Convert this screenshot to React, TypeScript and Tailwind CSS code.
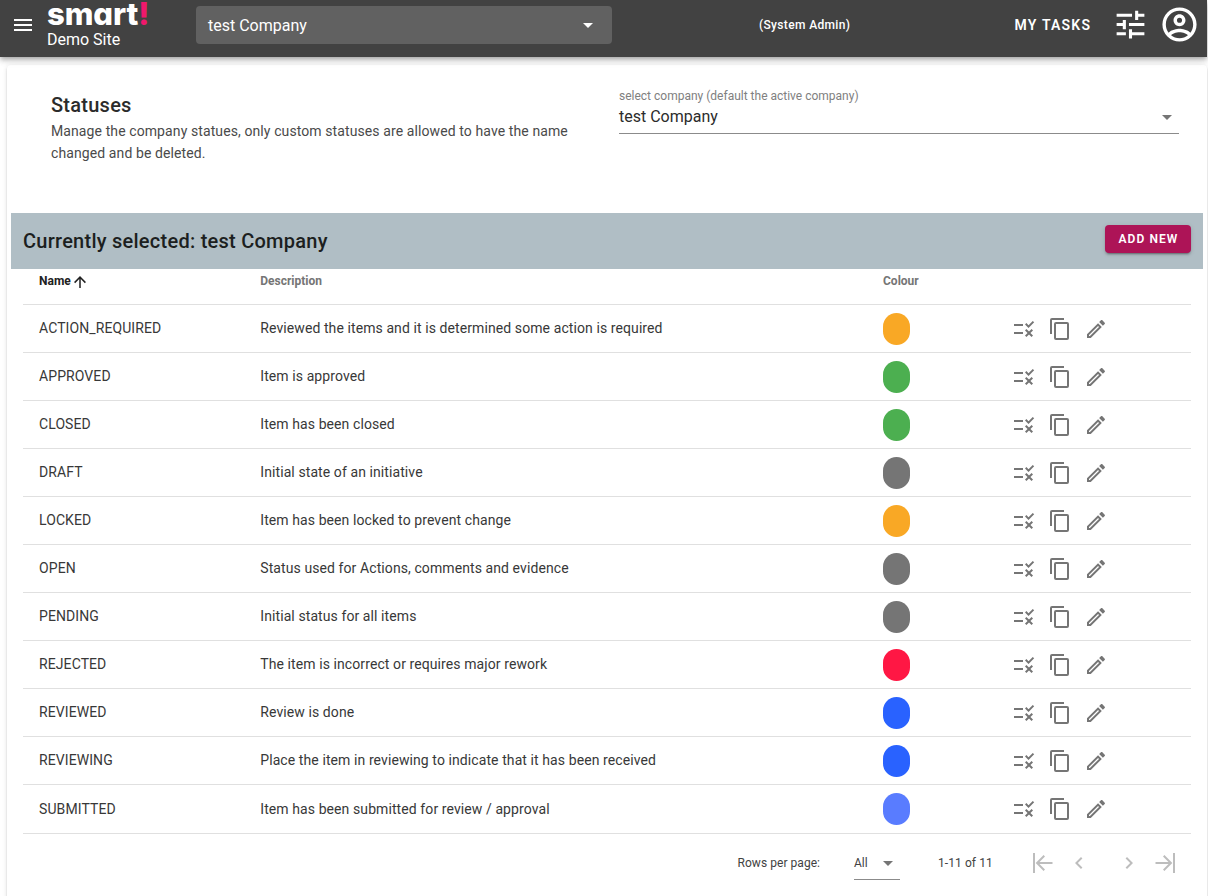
import React from "react";

const paths = {
  menu: "M3,6H21V8H3V6M3,11H21V13H3V11M3,16H21V18H3V16Z",
  menuDown: "M7,10L12,15L17,10H7Z",
  tune: "M3,17V19H9V17H3M3,5V7H13V5H3M13,21V19H21V17H13V15H11V21H13M7,9V11H3V13H7V15H9V9H7M21,13V11H11V13H21M15,9H17V7H21V5H17V3H15V9Z",
  account:
    "M12,2A10,10 0 0,0 2,12A10,10 0 0,0 12,22A10,10 0 0,0 22,12A10,10 0 0,0 12,2M7.07,18.28C7.5,17.38 10.12,16.5 12,16.5C13.88,16.5 16.5,17.38 16.93,18.28C15.57,19.36 13.86,20 12,20C10.14,20 8.43,19.36 7.07,18.28M18.36,16.83C16.93,15.09 13.46,14.5 12,14.5C10.54,14.5 7.07,15.09 5.64,16.83C4.62,15.5 4,13.82 4,12C4,7.59 7.59,4 12,4C16.41,4 20,7.59 20,12C20,13.82 19.38,15.5 18.36,16.83M12,6C10.06,6 8.5,7.56 8.5,9.5C8.5,11.44 10.06,13 12,13C13.94,13 15.5,11.44 15.5,9.5C15.5,7.56 13.94,6 12,6M12,11A1.5,1.5 0 0,1 10.5,9.5A1.5,1.5 0 0,1 12,8A1.5,1.5 0 0,1 13.5,9.5A1.5,1.5 0 0,1 12,11Z",
  arrowUp: "M13,20H11V8L5.5,13.5L4.08,12.08L12,4.16L19.92,12.08L18.5,13.5L13,8V20Z",
  rule: "M16.54 11L13 7.46l1.41-1.41 2.12 2.12 4.24-4.24 1.41 1.41L16.54 11zM11 7H2v2h9V7zm10 6.41L19.59 12 17 14.59 14.41 12 13 13.41 15.59 16 13 18.59 14.41 20 17 17.41 19.59 20 21 18.59 18.41 16 21 13.41zM11 15H2v2h9v-2z",
  copy: "M19,21H8V7H19M19,5H8A2,2 0 0,0 6,7V21A2,2 0 0,0 8,23H19A2,2 0 0,0 21,21V7A2,2 0 0,0 19,5M16,1H4A2,2 0 0,0 2,3V17H4V3H16V1Z",
  pencil:
    "M14.06,9L15,9.94L5.92,19H5V18.08L14.06,9M17.66,3C17.41,3 17.15,3.1 16.96,3.29L15.13,5.12L18.88,8.87L20.71,7.04C21.1,6.65 21.1,6 20.71,5.63L18.37,3.29C18.17,3.09 17.92,3 17.66,3M14.06,6.19L3,17.25V21H6.75L17.81,9.94L14.06,6.19Z",
  first: "M2,2H4V22H2V2M21.5,11V13H8.5L14,18.5L12.58,19.92L4.66,12L12.58,4.08L14,5.5L8.5,11H21.5Z",
  last: "M22,2H20V22H22V2M2.5,11V13H15.5L10,18.5L11.42,19.92L19.34,12L11.42,4.08L10,5.5L15.5,11H2.5Z",
  left: "M15.41,16.58L10.83,12L15.41,7.41L14,6L8,12L14,18L15.41,16.58Z",
  right: "M8.59,16.58L13.17,12L8.59,7.41L10,6L16,12L10,18L8.59,16.58Z",
};

function Icon({ name, className = "size-6" }: { name: keyof typeof paths; className?: string }) {
  return (
    <svg viewBox="0 0 24 24" fill="currentColor" className={`shrink-0 ${className}`} aria-hidden="true">
      <path d={paths[name]} />
    </svg>
  );
}

const rows = [
  { name: "ACTION_REQUIRED", text: "Reviewed the items and it is determined some action is required", color: "bg-[#f9a825]" },
  { name: "APPROVED", text: "Item is approved", color: "bg-[#4caf50]" },
  { name: "CLOSED", text: "Item has been closed", color: "bg-[#4caf50]" },
  { name: "DRAFT", text: "Initial state of an initiative", color: "bg-[#757575]" },
  { name: "LOCKED", text: "Item has been locked to prevent change", color: "bg-[#f9a825]" },
  { name: "OPEN", text: "Status used for Actions, comments and evidence", color: "bg-[#757575]" },
  { name: "PENDING", text: "Initial status for all items", color: "bg-[#757575]" },
  { name: "REJECTED", text: "The item is incorrect or requires major rework", color: "bg-[#ff1744]" },
  { name: "REVIEWED", text: "Review is done", color: "bg-[#2962ff]" },
  { name: "REVIEWING", text: "Place the item in reviewing to indicate that it has been received", color: "bg-[#2962ff]" },
  { name: "SUBMITTED", text: "Item has been submitted for review / approval", color: "bg-[#597cff]" },
];

const columns = "grid grid-cols-[221.25px_622.75px_129px_1fr] pl-4";

function Header() {
  return (
    <header className="relative z-10 mr-px flex h-[57px] items-start bg-[#424242] text-white shadow-[0_2px_4px_-1px_rgba(0,0,0,0.2),0_4px_5px_0_rgba(0,0,0,0.14),0_1px_10px_0_rgba(0,0,0,0.12)]">
      <button className="ml-[11px] mt-[13px]" aria-label="Menu">
        <Icon name="menu" />
      </button>
      <div className="ml-3 w-[149px]">
        <div className="h-[30px] whitespace-nowrap font-['Inter'] text-[31px]/[28px] font-extrabold tracking-[-0.1px] [font-feature-settings:'cv11']">
          smart<span className="text-[#f0186c]">!</span>
        </div>
        <div className="text-base/5">Demo Site</div>
      </div>
      <div className="mt-1.5 flex h-[38px] w-[416px] items-center justify-between rounded bg-[#616161] pl-3 pr-3 text-base">
        <span className="pt-0.5">test Company</span>
        <Icon name="menuDown" />
      </div>
      <div className="ml-[147px] mt-[15px] w-[255px] text-xs/5 font-medium tracking-[0.35px]">(System Admin)</div>
      <div className="mt-[15px] w-[98px] pl-[0.5px] text-sm/5 font-semibold tracking-[1.2px]">MY TASKS</div>
      <Icon name="tune" className="mt-1.5 size-[37px]" />
      <Icon name="account" className="ml-[10px] mt-1 size-[41px]" />
    </header>
  );
}

export default function App() {
  return (
    <div className="h-[896px] w-[1208px] overflow-hidden bg-white font-['Roboto',sans-serif] text-[#2b2b2b]">
      <Header />
      <main className="ml-[7px] mr-px mt-2 h-[850px] rounded bg-white px-1 shadow-[0_3px_1px_-2px_rgba(0,0,0,0.2),0_2px_2px_0_rgba(0,0,0,0.14),0_1px_5px_0_rgba(0,0,0,0.12)]">
        <section className="flex h-[148px] pl-10">
          <div className="w-[568px] pt-6">
            <h1 className="text-xl/8 font-medium tracking-[0.25px]">Statuses</h1>
            <p className="-mt-px w-[540px] text-sm/[22px] tracking-[0.1px] text-[#4a4a4a]">
              Manage the company statues, only custom statuses are allowed to have the name changed and be deleted.
            </p>
          </div>
          <div className="mt-[23px] h-[46px] w-[560px] border-b border-[#8b8b8b]">
            <div className="text-xs/4 text-[#808080]">select company (default the active company)</div>
            <div className="flex h-6 items-center justify-between text-base">
              <span className="pt-0.5">test Company</span>
              <Icon name="menuDown" className="mt-px size-6 text-[#757575]" />
            </div>
          </div>
        </section>
        <div className="flex h-14 items-center justify-between bg-[#b0bec5] px-3">
          <h2 className="text-xl font-medium tracking-[0.25px] text-[#1c1f20]">Currently selected: test Company</h2>
          <button className="mb-1 h-7 w-[86px] rounded bg-[#ad1457] pl-px text-xs font-semibold tracking-[1.07px] text-white shadow-[0_3px_1px_-2px_rgba(0,0,0,0.2),0_2px_2px_0_rgba(0,0,0,0.14),0_1px_5px_0_rgba(0,0,0,0.12)]">
            ADD NEW
          </button>
        </div>
        <div className="px-3">
          <div className={`${columns} h-9 border-b border-[#e0e0e0] pt-1 text-xs/4 font-bold text-[#757575]`}>
            <div className="flex text-[#212121]">
              Name
              <Icon name="arrowUp" className="size-[18px]" />
            </div>
            <div>Description</div>
            <div>Colour</div>
          </div>
          {rows.map((row) => (
            <div
              key={row.name}
              className={`${columns} group h-12 items-center border-b border-[#e0e0e0] text-sm tracking-[0.09px] text-[#383838] last:h-[49px] last:pb-px`}
            >
              <div className="pb-0.5 group-last:pb-0">{row.name}</div>
              <div className="pb-0.5 group-last:pb-0">{row.text}</div>
              <div className={`mt-px h-8 w-[27px] rounded-[14px] ${row.color}`} />
              <div className="mt-px flex gap-3 text-[#757575]">
                <Icon name="rule" />
                <Icon name="copy" />
                <Icon name="pencil" />
              </div>
            </div>
          ))}
        </div>
        <footer className="flex h-[58px] items-center pl-[726.5px] text-xs text-[#424242]">
          <span className="w-[116.5px] tracking-[0.05px]">Rows per page:</span>
          <div className="-mt-0.5 flex h-[36px] w-[46px] translate-y-0 items-end justify-between border-b border-[#8b8b8b] pb-1">
            <span className="pb-1">All</span>
            <Icon name="menuDown" className="size-6 text-[#757575]" />
          </div>
          <span className="ml-[38px] w-[93px] tracking-[0.08px]">1-11 of 11</span>
          <div className="flex items-center text-[#bdbdbd]">
            <Icon name="first" />
            <Icon name="left" className="ml-3 size-6" />
            <Icon name="right" className="ml-[26px] size-6" />
            <Icon name="last" className="ml-3 size-6" />
          </div>
        </footer>
      </main>
    </div>
  );
}
